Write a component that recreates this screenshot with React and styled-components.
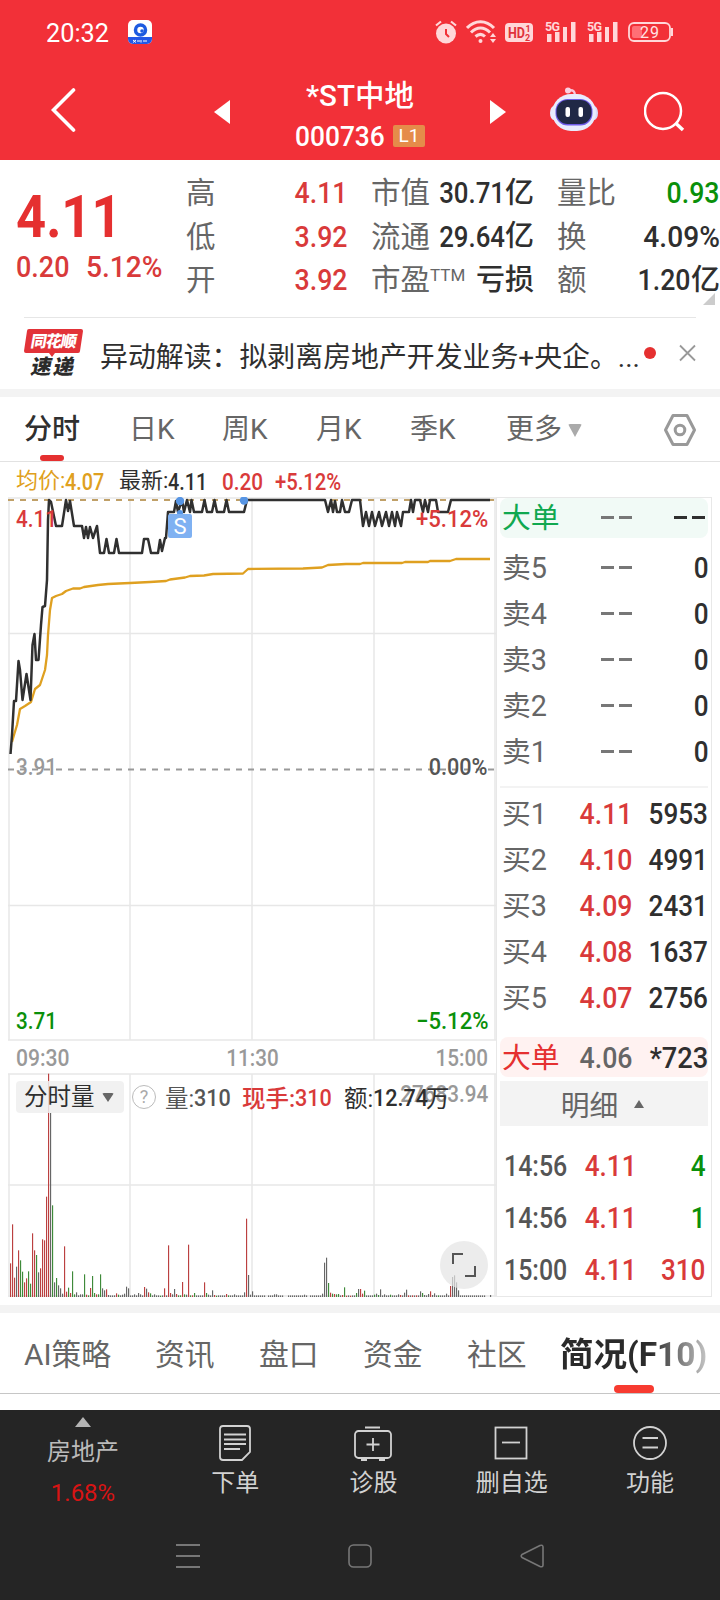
import React from "react";
import styled, { createGlobalStyle } from "styled-components";

const RED = "#d93a3a";
const GREEN = "#0a900a";
const INK = "#2f2f2f";
const GREY = "#666";

const Global = createGlobalStyle`
  * { box-sizing: border-box; }
  body { margin: 0; background: #fff; overflow: hidden; }
  svg { display: block; flex: none; }
`;

const Page = styled.div`
  width: 720px;
  height: 1600px;
  display: flex;
  flex-direction: column;
  overflow: hidden;
  background: #fff;
  color: ${INK};
  font-family: Roboto, "Noto Sans CJK SC", sans-serif;
  white-space: nowrap;
`;

/* Condensed figures used for every quote value. */
const Num = styled.span`
  display: inline-block;
  flex: none;
  font-size: ${(p) => p.$size || 29}px;
  font-weight: ${(p) => p.$weight || 500};
  line-height: 1;
  color: ${(p) => p.$color || "inherit"};
  transform: translateY(1px) scaleX(${(p) => p.$scale || 0.9});
  transform-origin: ${(p) => p.$origin || "left"} center;
`;

/* ---------- header ---------- */
const Header = styled.header`
  height: 160px;
  background: #f23038;
  color: #fff;
`;
const StatusBar = styled.div`
  height: 64px;
  padding: 0 47px 0 46px;
  display: flex;
  align-items: center;
`;
const Clock = styled.span`
  width: 82px;
  padding-top: 2px;
  font-size: 25.3px;
`;
const StatusIcons = styled.div`
  margin-left: auto;
  display: flex;
  align-items: center;
`;
const TitleBar = styled.div`
  height: 96px;
  display: grid;
  grid-template-columns: 51px 163px 66px 160px 50px 60px 94px 1fr;
  align-items: start;
`;
const IconSlot = styled.div`
  padding-top: ${(p) => p.$top}px;
  grid-column: ${(p) => p.$col};
`;
const StockTitle = styled.div`
  grid-column: 4;
  display: flex;
  flex-direction: column;
  align-items: center;
  padding-top: 15px;
`;
const StockName = styled.div`
  height: 34px;
  line-height: 34px;
  font-size: 29.5px;
  font-weight: 500;
`;
const StockCode = styled.div`
  display: flex;
  align-items: center;
  justify-content: space-between;
  width: 130px;
  height: 46px;
`;
const Level = styled.span`
  width: 32px;
  height: 22px;
  line-height: 22px;
  border-radius: 2px;
  background: #e58c4a;
  text-align: center;
  font-size: 19px;
`;

/* ---------- quote ---------- */
const Quote = styled.section`
  height: 157px;
  padding: 11px 0 0 16px;
  display: flex;
`;
const Headline = styled.div`
  width: 171px;
  padding-top: 15px;
`;
const BigPrice = styled.div`
  height: 60px;
`;
const Change = styled.div`
  display: flex;
  height: 40px;
  align-items: center;
`;
const ChangeCell = styled.div`
  width: 70px;
`;
const Stats = styled.div`
  width: ${(p) => p.$width}px;
  margin-right: ${(p) => p.$gap}px;
`;
const Stat = styled.div`
  height: 43.5px;
  display: flex;
  align-items: center;
  justify-content: space-between;
  font-size: 29px;
  color: ${GREY};
  sup { font-size: 17px; line-height: 1; vertical-align: 9px; }
`;
const StatLabel = styled.span`
  line-height: 40px;
  padding-top: 1px;
  margin-left: -1px;
  font-size: 29.5px;
`;
const Value = styled.div`
  display: flex;
  align-items: center;
  line-height: 40px;
  font-weight: 500;
  color: ${INK};
`;
const Corner = styled.span`
  position: absolute;
  left: 703px;
  top: 293px;
  border-style: solid;
  border-width: 0 0 12px 12px;
  border-color: transparent transparent #ccc transparent;
`;

/* ---------- news strip ---------- */
const News = styled.section`
  margin: 0 24px;
  height: 72px;
  border-top: 1px solid #e6e6e6;
  display: flex;
`;
const NewsLogo = styled.div`
  flex: 0 0 76px;
  padding-top: 10px;
`;
const NewsText = styled.div`
  flex: 0 0 544px;
  padding-top: 17px;
  height: 60px;
  line-height: 46px;
  font-size: 27.9px;
`;
const NewsMarks = styled.div`
  padding-top: 26px;
  display: flex;
  gap: 23px;
`;
const Band = styled.div`
  height: 8px;
  background: #f3f3f3;
`;

/* ---------- period tabs ---------- */
const Periods = styled.nav`
  height: 65px;
  border-bottom: 1px solid #e2e2e2;
  display: grid;
  grid-template-columns: 105px 93px 94px 94px 96px 157px 1fr;
  grid-template-rows: 64px;
  padding-left: 24px;
  line-height: 40px;
`;
const Period = styled.div`
  position: relative;
  padding-top: 2px;
  font-size: 28px;
  font-weight: ${(p) => (p.$on ? 500 : 400)};
  color: ${(p) => (p.$on ? INK : GREY)};
  display: flex;
  align-items: center;
  gap: 6px;
`;
const Marker = styled.span`
  position: absolute;
  left: ${(p) => p.$left}px;
  bottom: ${(p) => p.$bottom || 0}px;
  width: ${(p) => p.$width}px;
  height: ${(p) => p.$height}px;
  border-radius: 4px;
  background: ${(p) => p.$color};
`;
const Down = styled.span`
  border: solid transparent;
  border-width: ${(p) => p.$h}px ${(p) => p.$w / 2}px 0;
  border-top-color: ${(p) => p.$color};
  border-radius: 2px;
`;
const Up = styled.span`
  border: solid transparent;
  border-width: 0 ${(p) => p.$w / 2}px ${(p) => p.$h}px;
  border-bottom-color: ${(p) => p.$color};
`;

/* ---------- market area ---------- */
const Market = styled.section`
  height: 843px;
  display: grid;
  grid-template-columns: 496px 216px;
`;
const ChartSide = styled.div`
  display: flex;
  flex-direction: column;
`;
const Summary = styled.div`
  height: 35px;
  padding: 3px 0 0 16px;
  display: grid;
  grid-template-columns: 103px 103px 53px auto;
  align-items: center;
  font-size: 22px;
  line-height: 26px;
`;
const Pair = styled.span`
  display: flex;
  align-items: center;
  color: ${(p) => p.$color};
`;
const Plot = styled.div`
  position: relative;
  height: ${(p) => p.$height}px;
`;
const PlotLabel = styled.div`
  position: absolute;
  top: ${(p) => p.$top}px;
  ${(p) => (p.$right ? "right: 8px;" : "left: 16px;")}
  line-height: 1;
  display: flex;
`;
const SellMark = styled.span`
  position: absolute;
  left: 168px;
  top: 17px;
  width: 24px;
  height: 24px;
  border-radius: 2px;
  background: #7fb1f2;
  color: #fff;
  text-align: center;
  font-size: 22px;
  line-height: 25px;
`;
const Times = styled.div`
  height: 32px;
  padding: 0 8px 0 16px;
  display: flex;
  align-items: center;
  justify-content: space-between;
`;
const VolumeHead = styled.div`
  position: absolute;
  left: 16px;
  top: 8px;
  height: 32px;
  display: flex;
  align-items: center;
  font-size: 23.5px;
`;
const Picker = styled.div`
  width: 108px;
  height: 32px;
  margin-right: 8px;
  padding-left: 8px;
  display: flex;
  align-items: center;
  gap: 7px;
  border-radius: 4px;
  background: rgba(238, 238, 238, 0.85);
  line-height: 35px;
`;
const Help = styled.span`
  width: 24px;
  height: 24px;
  margin-right: 9px;
  border: 1.5px solid #bbb;
  border-radius: 50%;
  color: #aaa;
  font-size: 18px;
  line-height: 22px;
  text-align: center;
`;
const VolumeItem = styled.span`
  width: ${(p) => p.$width}px;
  display: flex;
  align-items: center;
  color: ${(p) => p.$color};
  font-weight: ${(p) => p.$weight || 400};
`;
const Expand = styled.span`
  position: absolute;
  left: 440px;
  top: 168px;
  width: 48px;
  height: 48px;
  border-radius: 50%;
  background: rgba(228, 228, 228, 0.72);
  display: grid;
  place-items: center;
`;

/* ---------- order book ---------- */
const Book = styled.div`
  margin-top: 35px;
  height: 800px;
  padding: 0 3px;
  border: 1px solid #e8e8e8;
  display: flex;
  flex-direction: column;
`;
const BigOrder = styled.div`
  height: 40px;
  flex: none;
  margin-top: ${(p) => p.$top}px;
  border-radius: 8px;
  background: ${(p) => p.$bg};
`;
const BookGap = styled.div`
  height: 6px;
`;
const Row = styled.div`
  height: ${(p) => p.$height || 46}px;
  padding: 0 ${(p) => p.$pad || 0}px 0 ${(p) => (p.$pad ? 4 : 2)}px;
  display: grid;
  grid-template-columns: ${(p) => (p.$pad ? 81 : 79)}px 52px 1fr;
  align-items: center;
  font-size: 28.8px;
  color: ${GREY};
`;
const Name = styled.span`
  line-height: 36px;
  padding-top: 1px;
  color: ${(p) => p.$color || GREY};
`;
const Cell = styled.span`
  display: flex;
  justify-content: flex-end;
  align-items: center;
`;
const Dash = styled.span`
  width: 13px;
  height: 3px;
  margin: 1px ${(p) => p.$shift || 1}px 0 4px;
  background: ${(p) => p.$color};
`;
const Rule = styled.div`
  height: 2px;
  flex: none;
  margin: 12px 0 2px;
  background: #f3f3f3;
`;
const DetailHead = styled.div`
  height: 45px;
  flex: none;
  margin: 4px 0 13px;
  padding-right: 3px;
  background: #f3f3f3;
  display: flex;
  align-items: center;
  justify-content: center;
  gap: 16px;
  font-size: 28.8px;
  color: ${GREY};
`;
const DetailTitle = styled.span`
  line-height: 38px;
  padding-top: 4px;
`;

/* ---------- section tabs ---------- */
const Sections = styled.nav`
  height: 81px;
  border-bottom: 1px solid #c6c6c6;
  padding-left: 24px;
  display: grid;
  grid-template-columns: 131px 104px 104px 104px 93px 1fr;
  align-items: start;
  line-height: 83px;
`;
const Section = styled.div`
  position: relative;
  height: 80px;
  font-size: ${(p) => (p.$on ? 33.5 : 29.8)}px;
  font-weight: ${(p) => (p.$on ? 700 : 400)};
  color: ${GREY};
`;
const Fade = styled.span`
  display: inline-block;
  background: linear-gradient(90deg, #2a2a2a 0 90px, #c8c8c8 148px);
  background-clip: text;
  -webkit-background-clip: text;
  color: transparent;
`;

/* ---------- bottom bar ---------- */
const Footer = styled.footer`
  margin-top: 16px;
  height: 190px;
  background: #252525;
`;
const Actions = styled.div`
  height: 110px;
  display: grid;
  grid-template-columns: 166px repeat(4, 138.3px);
`;
const Action = styled.div`
  display: flex;
  flex-direction: column;
  align-items: center;
  padding-top: 14px;
  font-size: 24px;
  line-height: 42px;
  color: #d2d2d2;
  svg { height: 38px; width: 40px; }
`;
const Sector = styled.div`
  display: flex;
  flex-direction: column;
  align-items: center;
  padding-top: 7px;
  font-size: 24px;
  line-height: 41px;
  color: #bbb;
  ${Up} { margin-bottom: 5px; }
`;
const Percent = styled.span`
  color: #d81414;
`;
const SystemNav = styled.div`
  height: 72px;
  display: flex;
  align-items: center;
  justify-content: center;
  gap: 148px;
`;

const price =
  "10.5,754 12,735 14,701 16,701 18.5,661 20,670 22.5,700 26.5,674 30.5,700 32.5,645 34.5,634 36,660 38.5,660 41,625 42.5,607 45,606 47,580 48,520 49,500 51,502 56,526 62,526 66,500 68,511 70,501 74,526 82,526 84,538 86,527 88,538 90,527 93,538 97,526 100,553 104,553 106.5,539 109,553 114,553 116.5,539 119,553 142,553 144,539 148,539 151,553 158,553 160,540 162,551 165,538 166,538 168,512 174,512 176,501 178,512 182,500 184,512 187,500 190,512 191.5,500 194,512 202,512 204.5,500 207,512 212,512 214.5,500 217,512 224,512 226.5,500 229,512 244,512 247,500 325,500 328,512 331,500 333,512 335,501 337,512 340,512 342,500 345,512 349,512 352,500 360,500 363,526 366,512 369,526 372,512 375,526 379,512 382,526 386,512 389,526 392,512 395,526 397,512 401,526 403,512 409,512 411,500 413,512 415,500 420,500 423,512 425,500 428,512 430,500 436,500 438,512 448,512 451,500 490,500";
const average =
  "12,742 14,735 17,725 20,709 25,706 31,702 35,689 40,685 45,670 47,655 48,635 50,610 52,598 56,596 62,594 66,591 73,588.5 80,588.5 84,587 98,585 108,584 130,583 150,582 166,581 170,579.5 185,577.5 190,576 204,575.5 213,574 243,573.5 248,569 303,568.5 322,567.5 328,565 346,564 360,564 363,563 402,563 405,562 428,562 430,561 450,561 456,559 490,559";

/* Minute volumes: minute index, colour key, height in thirds of a pixel. */
const volumeData =
  "0r101 1r218 2r58 3k91 4r140 5g110 6g76 7r44 8r56 9g77 10g40 11r191 12r140 13g126 14k74 15r86 16r173 17r170 18r301 19r670 20k552 21g275 22k44 23g57 24k35 25k26 26k10 27r152 28r16 29g28 30r12 31g77 32g8 33k14 34k5 35k8 36k8 37g68 38r7 39g5 40r27 41g63 42g12 43r8 44g8 45g68 46k26 47k20 48r23 49k6 52k5 53r11 54g7 55k5 56k7 57k10 58k31 59k26 62k8 64k12 65k8 67r30 68k25 69r14 70g11 72k8 75g4 77r26 79r155 80r12 81k8 82k24 83r9 84g5 85g5 86r45 87g8 88k7 89r157 90g5 91r5 92g12 97r44 98g12 99k7 101k20 102r6 103g4 108r9 109g5 112k8 117k14 118r235 119k66 120k7 121k17 132k8 133k8 147k7 156k10 157k103 158k118 159g42 160r13 161g10 162r9 163g8 164g9 166r6 167g29 168r4 170r4 173g12 174k24 175r24 176r10 177g19 182g7 183k10 184g6 185k23 187k8 190g7 194k8 195r6 197k13 198k22 199r5 201r5 203r5 205k17 206g12 207k6 209k9 210r17 211k6 212k11 214g5 218k10 220r33 221k60 222k65 223k44 224k20 240k6";
const barColors = { r: "#bb4040", g: "#3f8a3a", k: "#666" };
const bars = (() => {
  const known = {};
  volumeData.split(" ").forEach((item) => {
    const [, i, c, h] = item.match(/^(\d+)([rgk])(\d+)$/);
    known[i] = { c, h: h / 3 };
  });
  const gaps = [128, 137, 138, 149, 238, 239];
  return Array.from({ length: 241 }, (_, i) => ({ i, ...(known[i] || { c: "k", h: 1.6 }) })).filter(
    (b) => !gaps.includes(b.i)
  );
})();

const gridX = [9, 130, 252, 374, 495];

function PriceChart() {
  return (
    <svg width="496" height="544" viewBox="0 497 496 544" fill="none">
      <g stroke="#e7e7e7" strokeWidth="1.5">
        {gridX.map((x) => <path key={x} d={`M${x} 498V1040`} />)}
        {[498, 633.5, 905.5, 1040].map((y) => <path key={y} d={`M8 ${y}H496`} />)}
      </g>
      <path d="M8 500H496" stroke="#c0a068" strokeWidth="2" strokeDasharray="6 6" />
      <path d="M8 769.5H496" stroke="#999" strokeWidth="2" strokeDasharray="6 6" />
      <polyline points={average} stroke="#dfa020" strokeWidth="2.3" strokeLinejoin="round" />
      <polyline points={price} stroke="#303030" strokeWidth="2.5" strokeLinejoin="round" />
      <g fill="#5795e4">
        <circle cx="180" cy="501" r="4.2" />
        <circle cx="244" cy="500.5" r="4.2" />
        <circle cx="180" cy="513" r="3" />
      </g>
    </svg>
  );
}

function VolumeChart() {
  return (
    <svg width="496" height="224" viewBox="0 1073 496 224" fill="none">
      <g stroke="#e7e7e7" strokeWidth="1.5">
        {gridX.map((x) => <path key={x} d={`M${x} 1074V1297`} />)}
        {[1074, 1185, 1296].map((y) => <path key={y} d={`M8 ${y}H496`} />)}
      </g>
      {bars.map((b) => (
        <rect key={b.i} x={10 + b.i * 2} y={1297 - b.h} width="1.15" height={b.h} fill={barColors[b.c]} />
      ))}
    </svg>
  );
}

function Signal() {
  return (
    <svg width="32" height="24" viewBox="0 0 32 24" fill="#ffd7d9">
      <text x="0" y="10.500" fontSize="12.500" fontWeight="700" fontFamily="Roboto, sans-serif" textLength="15">5G</text>
      <rect x="2" y="14" width="4.5" height="8" />
      <rect x="10" y="12" width="4.5" height="10" />
      <rect x="18" y="7" width="4" height="15" />
      <rect x="26" y="2" width="4.5" height="20" />
    </svg>
  );
}

function StatusRow() {
  return (
    <StatusBar>
      <Clock>20:32</Clock>
      <svg width="24" height="24" viewBox="0 0 24 24">
        <rect width="24" height="24" rx="5" fill="#fff" />
        <path d="M0 17H24V19a5 5 0 0 1-5 5H5a5 5 0 0 1-5-5Z" fill="#2458e6" />
        <circle cx="12.5" cy="10" r="5" fill="none" stroke="#1d5be0" strokeWidth="3.5" />
        <circle cx="14" cy="11" r="1.8" fill="#1d5be0" />
        <path d="M5 20l3 2.5M8 20l-3 2.5M9 21h3M13 20v2.500M15 21h4" stroke="#fff" />
      </svg>
      <StatusIcons>
        <svg width="32" height="24" viewBox="0 0 32 24" fill="#ffd7d9">
          <circle cx="12" cy="13.500" r="10" />
          <path d="M2 5.500L7 1.500M22 5.500L17 1.500" stroke="#ffd7d9" strokeWidth="2.200" />
          <path d="M12 9v5l3 3" fill="none" stroke="#f23038" strokeWidth="2" />
        </svg>
        <svg width="39" height="24" viewBox="0 0 39 24" fill="none" stroke="#ffd7d9" strokeWidth="3">
          <path d="M1 8C9-.5 20-.5 28 8M5 12.500C11 6.500 18 6.500 24 12.500M9.500 16.500C13 13.500 16 13.500 19 16.500" />
          <circle cx="14.500" cy="21" r="2" fill="#ffd7d9" stroke="none" />
          <path d="M24 17l3-4 3 4ZM24 19l3 4 3-4Z" fill="#ffd7d9" stroke="none" />
        </svg>
        <svg width="40" height="24" viewBox="0 0 40 24">
          <rect y="3" width="28" height="19" rx="4" fill="#ffd7d9" />
          <g fill="#e0323c" fontFamily="Roboto, sans-serif" fontWeight="700">
            <text x="3" y="18" fontSize="14.500" textLength="17" lengthAdjust="spacingAndGlyphs">HD</text>
            <text x="20.500" y="11.500" fontSize="9">1</text>
            <text x="20" y="20.500" fontSize="9">2</text>
          </g>
        </svg>
        <Signal />
        <svg width="10" height="2" />
        <Signal />
        <svg width="54" height="24" viewBox="-9 0 54 24">
          <rect x="1" y="3" width="41" height="18" rx="5" fill="none" stroke="#ffd7d9" strokeWidth="1.800" />
          <rect x="4" y="6" width="10" height="12" rx="2" fill="#ff6f76" />
          <path d="M44 8v8" stroke="#ffd7d9" strokeWidth="2" />
          <text x="12" y="17.500" fontSize="16" textLength="19" fontFamily="Roboto, sans-serif" fill="#ffe3e4">29</text>
        </svg>
      </StatusIcons>
    </StatusBar>
  );
}

function Robot() {
  return (
    <svg width="48" height="46" viewBox="0 0 48 46">
      <path d="M19 3.500c4-1 6 1 6 5" fill="none" stroke="#f9c5dc" strokeWidth="2.500" />
      <circle cx="18" cy="3.500" r="3" fill="#fbd0e2" />
      <ellipse cx="4" cy="26" rx="4" ry="7" fill="#e6eaff" />
      <ellipse cx="44" cy="26" rx="4" ry="7" fill="#d9dbfa" />
      <rect x="2" y="7" width="44" height="37" rx="19" fill="#e9ebfd" />
      <rect x="5.500" y="12" width="37" height="26.500" rx="12" fill="#6f5be8" />
      <rect x="6.500" y="13" width="35" height="24" rx="11" fill="#202846" />
      <rect x="15.500" y="20" width="4.500" height="10" rx="2" fill="#fff" />
      <rect x="28.500" y="20" width="4.500" height="10" rx="2" fill="#fff" />
    </svg>
  );
}

function TitleRow() {
  return (
    <TitleBar>
      <IconSlot $col={2} $top={24}>
        <svg width="26" height="44" viewBox="0 0 26 44" fill="none" stroke="#fff" strokeWidth="3.600">
          <path d="M22.500 2L2.500 22L22.500 42" strokeLinecap="round" />
        </svg>
      </IconSlot>
      <IconSlot $col={3} $top={36}>
        <svg width="16" height="24"><path d="M16 0V24L0 12Z" fill="#fff" /></svg>
      </IconSlot>
      <StockTitle>
        <StockName>*ST中地</StockName>
        <StockCode>
          <Num $size={28} $scale={0.94}>000736</Num>
          <Level>L1</Level>
        </StockCode>
      </StockTitle>
      <IconSlot $col={6} $top={36}>
        <svg width="16" height="24"><path d="M0 0V24L16 12Z" fill="#fff" /></svg>
      </IconSlot>
      <IconSlot $col={7} $top={23}><Robot /></IconSlot>
      <IconSlot $col={8} $top={27}>
        <svg width="42" height="42" viewBox="0 0 42 42" fill="none" stroke="#fff" strokeWidth="2.500">
          <circle cx="19" cy="20" r="18" />
          <path d="M31.500 32L39 39" strokeWidth="3.500" />
        </svg>
      </IconSlot>
    </TitleBar>
  );
}

function StatRow({ label, value, unit, color = INK, scale = 0.92 }) {
  return (
    <Stat>
      <StatLabel>{label}</StatLabel>
      <Value>
        {value && <Num $color={color} $origin="right" $scale={scale}>{value}</Num>}
        {unit}
      </Value>
    </Stat>
  );
}

function BookRow({ name, price: p, count }) {
  return (
    <Row>
      <Name>{name}</Name>
      <Cell>
        {p ? <Num $color={RED} $origin="right" $scale={0.92}>{p}</Num> : <><Dash $color="#777" /><Dash $color="#777" /></>}
      </Cell>
      <Cell><Num $color={INK} $origin="right">{count}</Num></Cell>
    </Row>
  );
}

export default function App() {
  return (
    <Page>
      <Global />
      <Header>
        <StatusRow />
        <TitleRow />
      </Header>

      <Quote>
        <Headline>
          <BigPrice><Num $size={59} $weight={700} $scale={0.89} $color="#e53030">4.11</Num></BigPrice>
          <Change>
            <ChangeCell><Num $color={RED} $scale={0.93}>0.20</Num></ChangeCell>
            <Num $color={RED} $scale={0.97}>5.12%</Num>
          </Change>
        </Headline>
        <Stats $width={161} $gap={24}>
          <StatRow label="高" value="4.11" color={RED} />
          <StatRow label="低" value="3.92" color={RED} />
          <StatRow label="开" value="3.92" color={RED} />
        </Stats>
        <Stats $width={162} $gap={24}>
          <StatRow label="市值" value="30.71" unit="亿" scale={0.89} />
          <StatRow label="流通" value="29.64" unit="亿" scale={0.89} />
          <StatRow label={<>市盈<sup>TTM</sup></>} unit="亏损" />
        </Stats>
        <Stats $width={162} $gap={0}>
          <StatRow label="量比" value="0.93" color={GREEN} />
          <StatRow label="换" value="4.09%" scale={0.97} />
          <StatRow label="额" value="1.20" unit="亿" />
        </Stats>
        <Corner />
      </Quote>

      <News>
        <NewsLogo>
          <svg width="60" height="52" viewBox="0 0 60 52" fontFamily="Noto Sans CJK SC, sans-serif" fontWeight="900">
            <path d="M5 1H57q2 0 2 2L56 23q0 2-2 2H31l-3 4-3-4H2q-2 0-2-2L3 3q0-2 2-2Z" fill="#e23238" />
            <text transform="translate(6 19) skewX(-10)" fontSize="16" textLength="46" fill="#fff">同花顺</text>
            <text transform="translate(6 46) skewX(-12)" fontSize="20.500" textLength="43" fill="#2b2b2b">速递</text>
          </svg>
        </NewsLogo>
        <NewsText>异动解读：拟剥离房地产开发业务+央企。...</NewsText>
        <NewsMarks>
          <svg width="12" height="20"><circle cx="6" cy="9" r="6" fill="#e53030" /></svg>
          <svg width="17" height="20" viewBox="0 0 17 20" stroke="#999" strokeWidth="1.800">
            <path d="M1 1.500L16 16.500M16 1.500L1 16.500" />
          </svg>
        </NewsMarks>
      </News>
      <Band />

      <Periods>
        <Period $on>分时<Marker $left={16} $width={24} $height={6} $color="#e53030" /></Period>
        <Period>日K</Period>
        <Period>周K</Period>
        <Period>月K</Period>
        <Period>季K</Period>
        <Period>更多<Down $w={15} $h={13} $color="#aaa" /></Period>
        <Period>
          <svg width="34" height="32" viewBox="0 0 34 32" fill="none" stroke="#999" strokeWidth="3" strokeLinejoin="round">
            <path d="M10 1.500H24L31.500 16L24 30.500H10L2.500 16Z" />
            <circle cx="17" cy="16" r="4.800" />
          </svg>
        </Period>
      </Periods>

      <Market>
        <ChartSide>
          <Summary>
            <Pair $color="#dfa020">均价:<Num $size={23} $scale={0.86}>4.07</Num></Pair>
            <Pair $color={INK}>最新:<Num $size={23} $scale={0.86}>4.11</Num></Pair>
            <Num $size={23} $color={RED}>0.20</Num>
            <Num $size={23} $color={RED} $scale={0.88}>+5.12%</Num>
          </Summary>
          <Plot $height={544}>
            <PriceChart />
            <PlotLabel $top={10}><Num $size={23} $color={RED}>4.11</Num></PlotLabel>
            <PlotLabel $top={10} $right><Num $size={23} $color={RED} $scale={0.96} $origin="right">+5.12%</Num></PlotLabel>
            <PlotLabel $top={258}><Num $size={23} $color="#999">3.91</Num></PlotLabel>
            <PlotLabel $top={258} $right><Num $size={23} $color="#555" $scale={0.94} $origin="right">0.00%</Num></PlotLabel>
            <PlotLabel $top={512}><Num $size={23} $color={GREEN}>3.71</Num></PlotLabel>
            <PlotLabel $top={512} $right><Num $size={23} $color={GREEN} $scale={0.96} $origin="right">−5.12%</Num></PlotLabel>
            <SellMark>S</SellMark>
          </Plot>
          <Times>
            <Num $size={24} $color="#999" $scale={0.88}>09:30</Num>
            <Num $size={24} $color="#999" $scale={0.86} $origin="center">11:30</Num>
            <Num $size={24} $color="#999" $scale={0.86} $origin="right">15:00</Num>
          </Times>
          <Plot $height={224}>
            <VolumeChart />
            <PlotLabel $top={8} $right><Num $size={24} $color="#999" $scale={0.86} $origin="right">27683.94</Num></PlotLabel>
            <VolumeHead>
              <Picker>分时量<Down $w={12} $h={9} $color="#666" /></Picker>
              <Help>?</Help>
              <VolumeItem $width={77} $color="#555">量:<Num $size={24}>310</Num></VolumeItem>
              <VolumeItem $width={102} $color={RED} $weight={500}>现手:<Num $size={24}>310</Num></VolumeItem>
              <VolumeItem $width={82} $color={INK}>额:<Num $size={24}>12.74</Num></VolumeItem>
              <VolumeItem $color={INK}>万</VolumeItem>
            </VolumeHead>
            <Expand>
              <svg width="26" height="26" viewBox="0 0 26 26" fill="none" stroke="#555" strokeWidth="2">
                <path d="M2 12V2H12M24 14V24H14" />
              </svg>
            </Expand>
          </Plot>
        </ChartSide>

        <Book>
          <BigOrder $top={0} $bg="#f1faf6">
            <Row $height={38}>
              <Name $color="#10a850">大单</Name>
              <Cell><Dash $color="#777" /><Dash $color="#777" /></Cell>
              <Cell><Dash $color={INK} /><Dash $color={INK} $shift={3} /></Cell>
            </Row>
          </BigOrder>
          <BookGap />
          {["卖5", "卖4", "卖3", "卖2", "卖1"].map((n) => <BookRow key={n} name={n} count="0" />)}
          <Rule />
          <BookRow name="买1" price="4.11" count="5953" />
          <BookRow name="买2" price="4.10" count="4991" />
          <BookRow name="买3" price="4.09" count="2431" />
          <BookRow name="买4" price="4.08" count="1637" />
          <BookRow name="买5" price="4.07" count="2756" />
          <BigOrder $top={17} $bg="#fff2f1">
            <Row $height={40}>
              <Name $color="#e53030">大单</Name>
              <Cell><Num $color="#666" $origin="right" $scale={0.92}>4.06</Num></Cell>
              <Cell><Num $color={INK} $origin="right" $scale={0.94}>*723</Num></Cell>
            </Row>
          </BigOrder>
          <DetailHead><DetailTitle>明细</DetailTitle><Up $w={11} $h={8} $color="#666" /></DetailHead>
          {[["14:56", "4", GREEN], ["14:56", "1", GREEN], ["15:00", "310", RED]].map(([t, n, c], i) => (
            <Row key={i} $height={52} $pad={3}>
              <Num $color="#555" $scale={0.86}>{t}</Num>
              <Cell><Num $color={RED} $origin="right">4.11</Num></Cell>
              <Cell><Num $color={c} $origin="right">{n}</Num></Cell>
            </Row>
          ))}
        </Book>
      </Market>
      <Band />

      <Sections>
        <Section>AI策略</Section>
        <Section>资讯</Section>
        <Section>盘口</Section>
        <Section>资金</Section>
        <Section>社区</Section>
        <Section $on>
          <Fade>简况(F10)</Fade>
          <Marker $left={54} $width={40} $height={8} $color="#f73b30" />
        </Section>
      </Sections>

      <Footer>
        <Actions>
          <Sector>
            <Up $w={17} $h={10} $color="#b4b4b4" />
            <span>房地产</span>
            <Percent>1.68%</Percent>
          </Sector>
          <Action>
            <svg viewBox="0 0 40 38" fill="none" stroke="#d2d2d2" strokeWidth="1.800">
              <path d="M8 2H32q3 0 3 3V28L27 36H8q-3 0-3-3V5q0-3 3-3ZM9 10.500H31M9 15.500H31M9 20H31M9 25H25" />
            </svg>
            下单
          </Action>
          <Action>
            <svg viewBox="0 0 40 38" fill="none" stroke="#d2d2d2" strokeWidth="1.800">
              <rect x="2" y="7" width="36" height="27" rx="3.500" />
              <path d="M12 3.500H27M20 14V27M13.500 20.500H26.500M8 36H14M26 36H32" />
            </svg>
            诊股
          </Action>
          <Action>
            <svg viewBox="0 0 40 38" fill="none" stroke="#d2d2d2" strokeWidth="1.800">
              <rect x="3.500" y="3.500" width="31" height="31" />
              <path d="M10 18.500H28" />
            </svg>
            删自选
          </Action>
          <Action>
            <svg viewBox="0 0 40 38" fill="none" stroke="#d2d2d2" strokeWidth="1.800">
              <circle cx="20" cy="19" r="16" />
              <path d="M12.500 14H28M12.500 23.500H28" />
            </svg>
            功能
          </Action>
        </Actions>
        <SystemNav>
          <svg width="24" height="24" stroke="#777" strokeWidth="1.800"><path d="M0 1H24M0 12H24M0 23H24" /></svg>
          <svg width="24" height="24" fill="none" stroke="#777" strokeWidth="1.600"><rect x="1" y="1" width="22" height="22" rx="4.500" /></svg>
          <svg width="24" height="24" fill="none" stroke="#777" strokeWidth="1.600" strokeLinejoin="round">
            <path d="M20 1.500Q23 .5 23 3V21Q23 23.500 20 22.500L2 13.500Q.5 12 2 10.500Z" />
          </svg>
        </SystemNav>
      </Footer>
    </Page>
  );
}
